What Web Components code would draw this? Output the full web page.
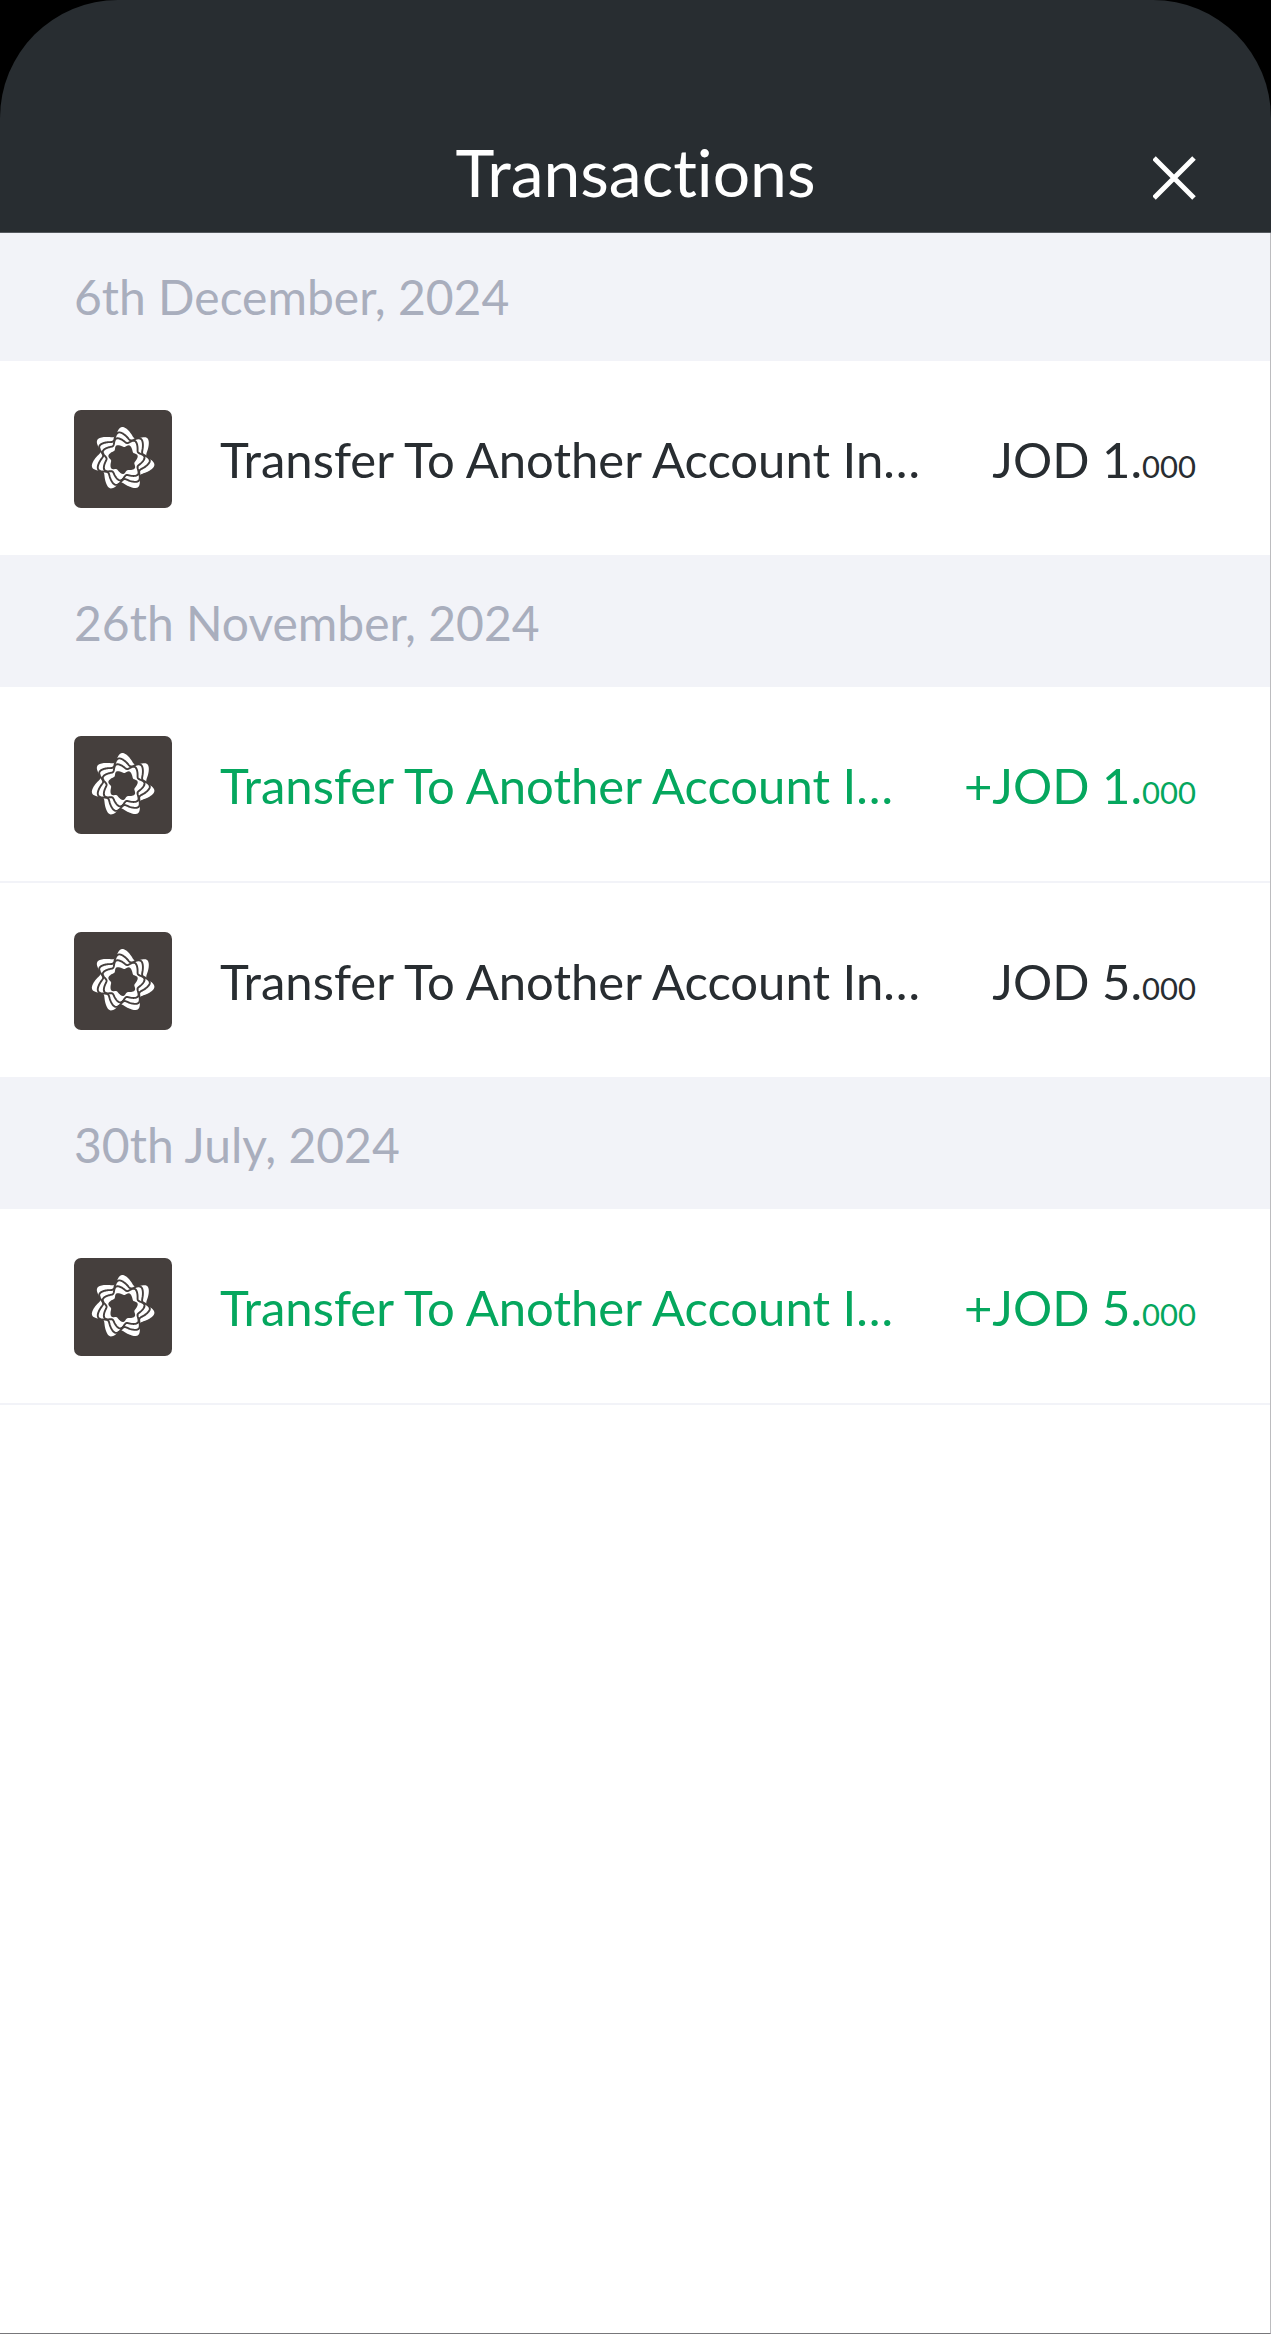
<!DOCTYPE html>
<html lang="en">
<head>
<meta charset="utf-8">
<meta name="viewport" content="width=device-width, initial-scale=1">
<title>Transactions</title>
<style>
    html {
        background: #000;
    }
    body {
        margin: 0;
        font-family: Lato, "Open Sans", sans-serif;
        font-variant-ligatures: none;
        color: #282d31;
    }
</style>
</head>
<body>
<transactions-screen>
    <screen-header slot="header">Transactions</screen-header>
    <day-group date="6th December, 2024">
        <transaction-row amount="JOD 1." decimals="000">Transfer To Another Account In…</transaction-row>
    </day-group>
    <day-group date="26th November, 2024">
        <transaction-row credit amount="+JOD 1." decimals="000">Transfer To Another Account I…</transaction-row>
        <transaction-row amount="JOD 5." decimals="000">Transfer To Another Account In…</transaction-row>
    </day-group>
    <day-group date="30th July, 2024">
        <transaction-row credit amount="+JOD 5." decimals="000">Transfer To Another Account I…</transaction-row>
    </day-group>
</transactions-screen>

<script>
class TransactionsScreen extends HTMLElement {
    constructor() {
        super();
        this.attachShadow({ mode: 'open' });
        this.shadowRoot.innerHTML = `
            <style>
                :host {
                    display: flex;
                    flex-direction: column;
                    min-height: 100vh;
                }
                main {
                    flex: 1;
                    background: #fff;
                    border-right: 1px solid #bcbcbf;
                    border-bottom: 1px solid #77777a;
                }
            </style>
            <slot name="header"></slot>
            <main><slot></slot></main>
        `;
    }
}

class ScreenHeader extends HTMLElement {
    constructor() {
        super();
        this.attachShadow({ mode: 'open' });
        this.shadowRoot.innerHTML = `
            <style>
                :host {
                    display: block;
                }
                header {
                    display: grid;
                    grid-template-columns: 1fr auto 1fr;
                    align-items: end;
                    padding: 132px 74px 20px;
                    background: #282d31;
                    border-bottom: 1px solid #55595e;
                    border-radius: 118px 118px 0 0;
                }
                h1 {
                    grid-column: 2;
                    margin: 0;
                    font-size: 66px;
                    line-height: 80px;
                    font-weight: 400;
                    color: #fff;
                }
                button {
                    justify-self: end;
                    display: flex;
                    padding: 0 0 12px;
                    border: 0;
                    background: none;
                    color: #fff;
                    cursor: pointer;
                }
            </style>
            <header>
                <h1><slot></slot></h1>
                <button type="button" aria-label="Close">
                    <svg width="44" height="44" viewBox="0 0 44 44" fill="none" stroke="currentColor" stroke-width="5">
                        <path d="M1 2 41 42M41 2 1 42"/>
                    </svg>
                </button>
            </header>
        `;
    }
}

class DayGroup extends HTMLElement {
    constructor() {
        super();
        this.attachShadow({ mode: 'open' });
        this.shadowRoot.innerHTML = `
            <style>
                :host {
                    display: block;
                }
                :host(:not(:first-of-type)) h2 {
                    border-top: 2px solid #f2f3f8;
                }
                h2 {
                    margin: 0;
                    padding: 34px 74px;
                    background: #f2f3f8;
                    font-size: 48px;
                    line-height: 60px;
                    font-weight: 400;
                    color: #a9aebd;
                }
            </style>
            <section>
                <h2></h2>
                <slot></slot>
            </section>
        `;
    }

    connectedCallback() {
        this.shadowRoot.querySelector('h2').textContent = this.getAttribute('date');
    }
}

// Seven-lobed rosette, one closed wavy curve per ring
class BankLogo extends HTMLElement {
    constructor() {
        super();
        this.attachShadow({ mode: 'open' });
        this.shadowRoot.innerHTML = `
            <style>
                :host {
                    display: block;
                    flex: none;
                    width: 98px;
                    height: 98px;
                    border-radius: 7px;
                    background: #453f3d;
                }
                svg {
                    display: block;
                    stroke: #453f3d;
                    stroke-width: 1.9;
                    stroke-linejoin: round;
                }
            </style>
            <svg viewBox="-49 -49 98 98" width="98" height="98" aria-hidden="true">
                <path fill="#fff" stroke="none" d="${this.ring(27.8, 4.2, 0.15)}"/>
                <path fill="none" d="${this.ring(23.5, 3.4, -0.8)}"/>
                <path fill="none" d="${this.ring(19, 2.6, -1.8)}"/>
                <path fill="#453f3d" stroke="none" d="${this.ring(13.5, 1.5, -2.8)}"/>
            </svg>
        `;
    }

    ring(radius, depth, shift) {
        const points = [];
        for (let i = 0; i < 210; i++) {
            const t = i / 210 * Math.PI * 2;
            const u = 7 * t - shift;
            // the inner cosine makes every lobe steeper on one side
            const r = radius + depth * Math.cos(u + 0.3 * Math.cos(u));
            points.push((r * Math.sin(t)).toFixed(2) + ' ' + (-r * Math.cos(t)).toFixed(2));
        }
        return 'M' + points.join('L') + 'Z';
    }
}

class TransactionRow extends HTMLElement {
    constructor() {
        super();
        this.attachShadow({ mode: 'open' });
        this.shadowRoot.innerHTML = `
            <style>
                :host {
                    display: flex;
                    align-items: center;
                    gap: 48px;
                    padding: 49px 74px 47px;
                    border-bottom: 2px solid #f2f3f8;
                    font-size: 49px;
                    line-height: 60px;
                }
                :host([credit]) {
                    color: #05a75e;
                }
                .name {
                    flex: 1;
                    min-width: 0;
                    white-space: nowrap;
                }
                .amount {
                    white-space: nowrap;
                }
                small {
                    font-size: 31px;
                    line-height: 1;
                }
            </style>
            <bank-logo></bank-logo>
            <span class="name"><slot></slot></span>
            <span class="amount"><span id="whole"></span><small></small></span>
        `;
    }

    connectedCallback() {
        this.shadowRoot.querySelector('#whole').textContent = this.getAttribute('amount');
        this.shadowRoot.querySelector('small').textContent = this.getAttribute('decimals');
    }
}

customElements.define('transactions-screen', TransactionsScreen);
customElements.define('screen-header', ScreenHeader);
customElements.define('day-group', DayGroup);
customElements.define('bank-logo', BankLogo);
customElements.define('transaction-row', TransactionRow);
</script>
</body>
</html>
